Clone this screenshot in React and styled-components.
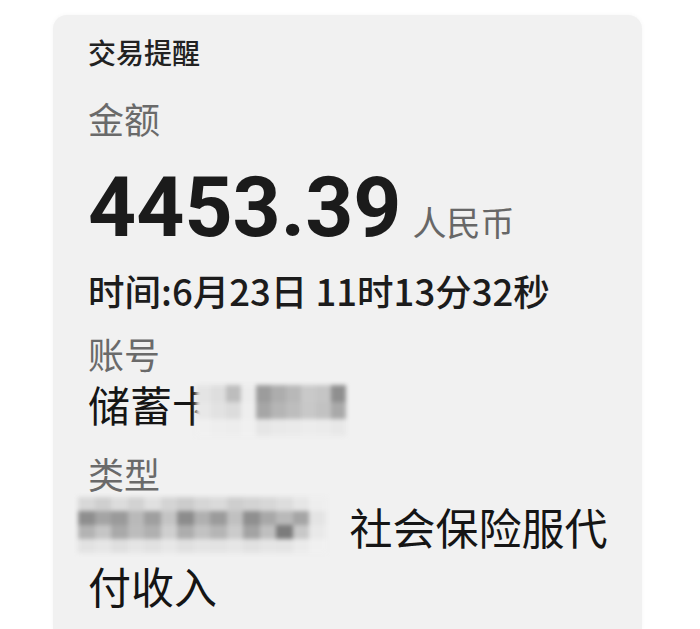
import React from "react";
import styled, { createGlobalStyle } from "styled-components";

const Global = createGlobalStyle`
  html, body {
    margin: 0;
    padding: 0;
    background: #ffffff;
    overflow: hidden;
  }
  body {
    font-family: "Noto Sans CJK SC", "Noto Sans", sans-serif;
  }
`;

const Page = styled.div`
  width: 700px;
  height: 629px;
  padding: 15px 58px 0 53px;
  box-sizing: border-box;
`;

const Card = styled.div`
  background: #f1f1f1;
  border-radius: 14px 14px 0 0;
  height: 100%;
  box-sizing: border-box;
  padding: 17px 28px 0 35px;
  box-shadow: 0 0 5px rgba(0, 0, 0, 0.04);
  display: flex;
  flex-direction: column;
  color: #1b1b1b;
`;

const Title = styled.div`
  font-size: 28px;
  font-weight: 500;
  line-height: 40px;
  color: #222;
`;

const Label = styled.div`
  font-size: 36px;
  line-height: 48px;
  color: #6a6a6a;
  margin-top: ${(p) => p.$mt || 0}px;
`;

const AmountRow = styled.div`
  display: flex;
  align-items: baseline;
  gap: 11px;
  margin-top: 16px;
  height: 108px;
`;

const Amount = styled.span`
  font-family: Roboto, "Noto Sans", sans-serif;
  font-size: 84px;
  font-weight: 700;
  color: #1b1b1b;
`;

const Currency = styled.span`
  font-size: 34px;
  color: #676767;
`;

const TimeLine = styled.div`
  font-size: 36.5px;
  line-height: 50px;
  font-weight: 500;
  color: #1c1c1c;
`;

const Value = styled.div`
  font-size: ${(p) => p.$fs || 42}px;
  line-height: ${(p) => p.$lh || 54}px;
  color: #151515;
  margin-top: ${(p) => p.$mt || 0}px;
`;

const Mosaic = styled.span`
  display: inline-grid;
  grid-template-columns: repeat(${(p) => p.$cols}, ${(p) => p.$cell}px);
  grid-auto-rows: ${(p) => p.$row}px;
  vertical-align: ${(p) => p.$va || "middle"};
  margin-left: ${(p) => p.$ml || 0}px;
  margin-right: ${(p) => p.$mr || 0}px;
  filter: blur(2px);
`;

const Cell = styled.span`
  background: ${(p) => p.$c};
`;

const accountCells = [
  ["#e4e4e4", "#dedede", "#bdbdbd", "#ececec", "#9c9c9c", "#adadad", "#b8b8b8", "#c9c9c9", "#c5c5c5", "#8f8f8f"],
  ["#e8e8e8", "#e2e2e2", "#dcdcdc", "#eeeeee", "#a6a6a6", "#b5b5b5", "#bdbdbd", "#c8c8c8", "#c2c2c2", "#a9a9a9"],
  ["#f0f0f0", "#eeeeee", "#ededed", "#f0f0f0", "#e6e6e6", "#e9e9e9", "#eaeaea", "#ececec", "#ebebeb", "#e8e8e8"],
];

const typeCells = [
  ["#d8d8d8", "#cfcfcf", "#dcdcdc", "#d2d2d2", "#e0e0e0", "#d4d4d4", "#cccccc", "#d6d6d6", "#dadada", "#cecece", "#d3d3d3", "#d7d7d7", "#dddddd", "#e6e6e6", "#eeeeee"],
  ["#8e8e8e", "#a4a4a4", "#9a9a9a", "#b9b9b9", "#9f9f9f", "#c4c4c4", "#8c8c8c", "#b0b0b0", "#9b9b9b", "#c0c0c0", "#8f8f8f", "#a8a8a8", "#b9b9b9", "#a5a5a5", "#e4e4e4"],
  ["#b3b3b3", "#c5c5c5", "#a9a9a9", "#bcbcbc", "#b0b0b0", "#cfcfcf", "#adadad", "#c2c2c2", "#b5b5b5", "#cbcbcb", "#a3a3a3", "#bfbfbf", "#7c7c7c", "#c8c8c8", "#e9e9e9"],
  ["#e2e2e2", "#e6e6e6", "#dfdfdf", "#e5e5e5", "#e1e1e1", "#e7e7e7", "#e0e0e0", "#e4e4e4", "#e3e3e3", "#e6e6e6", "#e1e1e1", "#e5e5e5", "#e4e4e4", "#ebebeb", "#f0f0f0"],
];

const Blur = ({ rows, cell, row, ...rest }) => (
  <Mosaic $cols={rows[0].length} $cell={cell} $row={row} {...rest}>
    {rows.flat().map((c, i) => (
      <Cell key={i} $c={c} />
    ))}
  </Mosaic>
);

export default function App() {
  return (
    <Page>
      <Global />
      <Card>
        <Title>交易提醒</Title>
        <Label $mt={22}>金额</Label>
        <AmountRow>
          <Amount>4453.39</Amount>
          <Currency>人民币</Currency>
        </AmountRow>
        <TimeLine>时间:6月23日 11时13分32秒</TimeLine>
        <Label $mt={13}>账号</Label>
        <Value>
          储蓄卡
          <Blur rows={accountCells} cell={15} row={17} $ml={-18} />
        </Value>
        <Label $mt={13}>类型</Label>
        <Value $fs={43} $lh={59}>
          <Blur rows={typeCells} cell={16.5} row={14} $ml={-10} $mr={24} $va="top" />
          社会保险服代付收入
        </Value>
      </Card>
    </Page>
  );
}
